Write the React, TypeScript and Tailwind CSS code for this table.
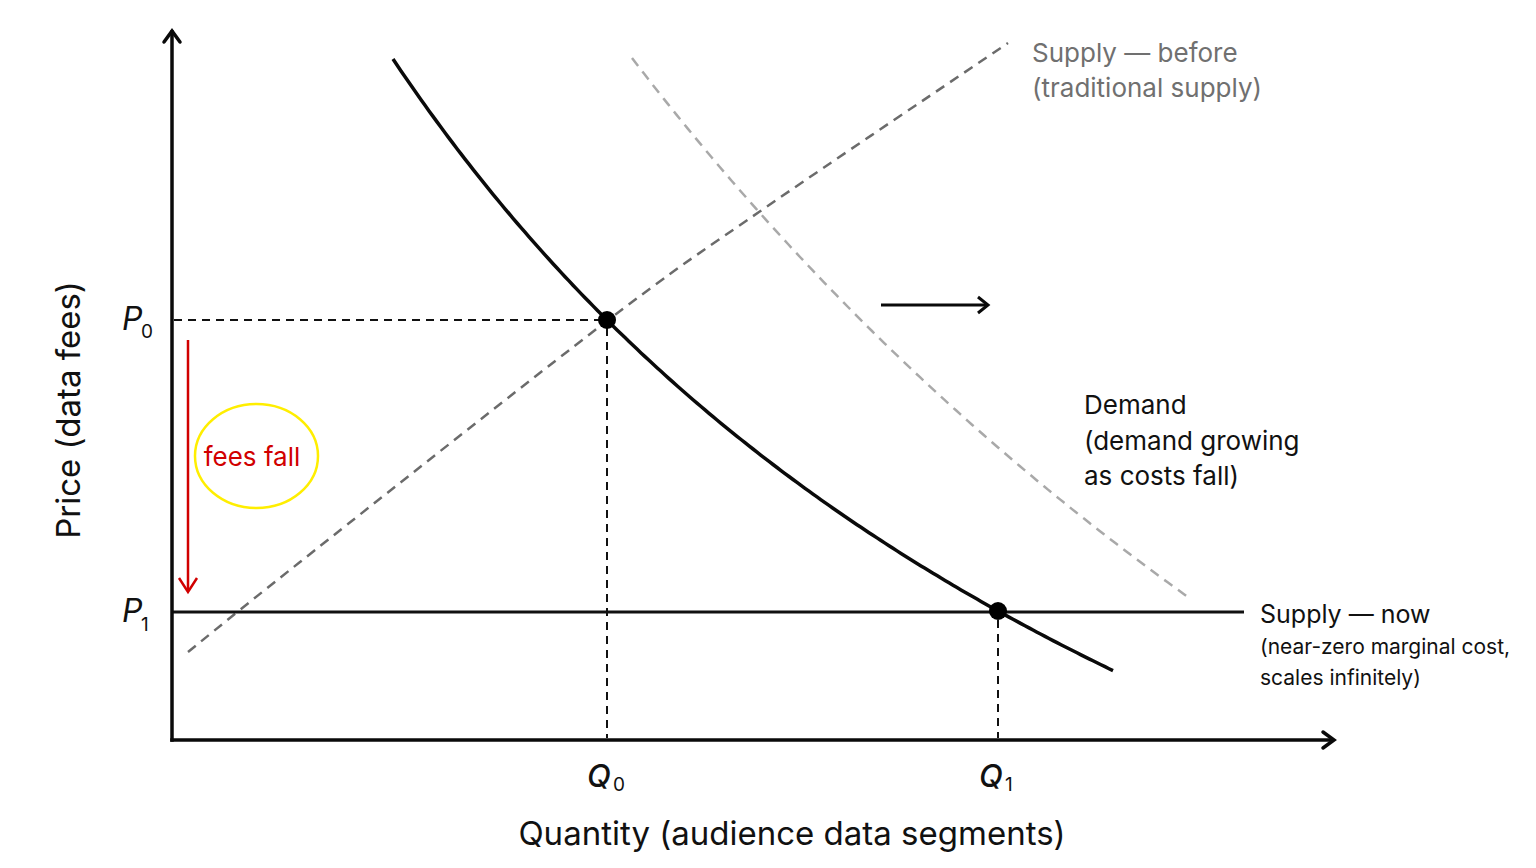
import React from 'react';

type Pt = [number, number];

// smooth path through points (catmull-rom -> cubic bezier)
function smooth(pts: Pt[]): string {
  let d = `M${pts[0][0]},${pts[0][1]}`;
  for (let i = 0; i < pts.length - 1; i++) {
    const p0 = pts[i - 1] || pts[i];
    const p1 = pts[i];
    const p2 = pts[i + 1];
    const p3 = pts[i + 2] || p2;
    const c1: Pt = [p1[0] + (p2[0] - p0[0]) / 6, p1[1] + (p2[1] - p0[1]) / 6];
    const c2: Pt = [p2[0] - (p3[0] - p1[0]) / 6, p2[1] - (p3[1] - p1[1]) / 6];
    d += ` C${c1[0].toFixed(1)},${c1[1].toFixed(1)} ${c2[0].toFixed(1)},${c2[1].toFixed(1)} ${p2[0]},${p2[1]}`;
  }
  return d;
}

// hyperbolic demand curve y = a - b / (x - c), sampled
function hyper(a: number, b: number, c: number, from: number, to: number): string {
  const pts: string[] = [];
  for (let x = from; x <= to; x += 4) {
    pts.push(`${x},${(a - b / (x - c)).toFixed(1)}`);
  }
  pts.push(`${to},${(a - b / (to - c)).toFixed(1)}`);
  return 'M' + pts.join(' L');
}

const supplyBefore: Pt[] = [
  [188, 652],
  [300, 562],
  [607, 321],
  [759, 212],
  [1008, 43],
];

export default function App() {
  return (
    <div className="h-[868px] w-[1536px] overflow-hidden bg-white font-['Inter',sans-serif]">
      <svg width="1536" height="868" viewBox="0 0 1536 868" className="block">
        {/* guides */}
        <g stroke="#111" strokeWidth="2" strokeDasharray="8 6" fill="none">
          <line x1="174" y1="320" x2="600" y2="320" />
          <line x1="607" y1="328" x2="607" y2="738" />
          <line x1="998" y1="620" x2="998" y2="738" />
        </g>

        {/* supply before + shifted demand */}
        <path d={smooth(supplyBefore)} fill="none" stroke="#6b6b6b" strokeWidth="2.5" strokeDasharray="10 7" />
        <path
          d={hyper(2132.8, 3286453, -952, 632, 1188)}
          fill="none"
          stroke="#a9a9a9"
          strokeWidth="2.5"
          strokeDasharray="10 7"
        />

        {/* supply now */}
        <line x1="172" y1="612" x2="1244" y2="612" stroke="#111" strokeWidth="3" />

        {/* demand */}
        <path
          d={hyper(1475, 1340939, -554, 393, 1113)}
          fill="none"
          stroke="#0a0a0a"
          strokeWidth="3.5"
          strokeLinejoin="round"
        />

        {/* axes */}
        <g stroke="#0a0a0a" strokeWidth="3.5" fill="none" strokeLinecap="square">
          <line x1="172" y1="32" x2="172" y2="740" />
          <line x1="172" y1="740" x2="1332" y2="740" />
          <polyline points="164,42 172,31 180,42" strokeLinecap="round" strokeLinejoin="miter" />
          <polyline points="1323,732 1334,740 1323,748" strokeLinecap="round" strokeLinejoin="miter" />
        </g>

        {/* shift arrow */}
        <g stroke="#0a0a0a" strokeWidth="3" fill="none">
          <line x1="881" y1="305" x2="986" y2="305" />
          <polyline points="978,297 988,305 978,313" strokeLinejoin="miter" />
        </g>

        {/* equilibrium dots */}
        <circle cx="607" cy="320" r="9" fill="#000" />
        <circle cx="998" cy="611" r="9" fill="#000" />

        {/* fees fall arrow */}
        <g stroke="#d10000" strokeWidth="2.5" fill="none">
          <line x1="188" y1="340" x2="188" y2="590" />
          <polyline points="179,578 188,592 197,578" />
        </g>
        <ellipse cx="256.5" cy="456" rx="61.5" ry="52" fill="none" stroke="#ffee00" strokeWidth="2.5" />
        <text x="252" y="466" textAnchor="middle" fontSize="26" fill="#d10000">
          fees fall
        </text>

        {/* price labels */}
        <text x="122" y="330" fontSize="32" fontStyle="italic" fill="#111">
          P
        </text>
        <text x="141" y="338" fontSize="19" fill="#111">
          0
        </text>
        <text x="122" y="622" fontSize="32" fontStyle="italic" fill="#111">
          P
        </text>
        <text x="141" y="631" fontSize="19" fill="#111">
          1
        </text>

        {/* quantity labels */}
        <text x="587" y="787" fontSize="31" fontStyle="italic" fontWeight="500" fill="#111">
          Q
        </text>
        <text x="613" y="791" fontSize="19" fill="#111">
          0
        </text>
        <text x="979" y="787" fontSize="31" fontStyle="italic" fontWeight="500" fill="#111">
          Q
        </text>
        <text x="1005" y="791" fontSize="19" fill="#111">
          1
        </text>

        {/* axis titles */}
        <text x="792" y="845" textAnchor="middle" fontSize="33" fill="#111">
          Quantity (audience data segments)
        </text>
        <text transform="translate(80 410) rotate(-90)" textAnchor="middle" fontSize="33" fill="#111">
          Price (data fees)
        </text>

        {/* curve labels */}
        <g fontSize="26" fill="#707070">
          <text x="1032" y="62">Supply — before</text>
          <text x="1032" y="97">(traditional supply)</text>
        </g>
        <g fontSize="26" fill="#111">
          <text x="1084" y="414">Demand</text>
          <text x="1084" y="450">(demand growing</text>
          <text x="1084" y="485">as costs fall)</text>
        </g>
        <text x="1260" y="623" fontSize="25" fill="#111">
          Supply — now
        </text>
        <g fontSize="21" fill="#111">
          <text x="1260" y="654">(near-zero marginal cost,</text>
          <text x="1260" y="685">scales infinitely)</text>
        </g>
      </svg>
    </div>
  );
}
